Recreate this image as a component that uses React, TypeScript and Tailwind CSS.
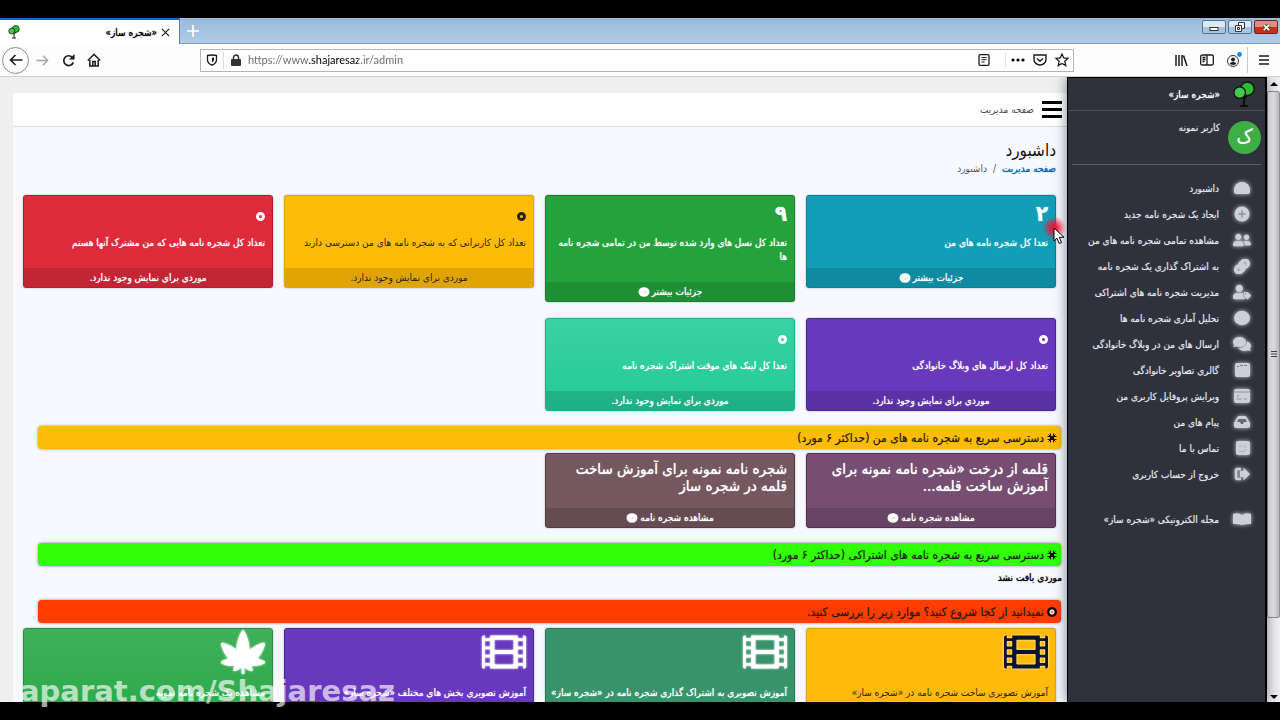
import type { ReactNode } from "react";
import { FaCannabis, FaComments, FaFilm, FaLink, FaUserFriends, FaUserTag } from "react-icons/fa";

function TreeLogo({ className, trunk }: { className: string; trunk: string }) {
  return (
    <svg viewBox="0 0 24 28" className={className} aria-hidden="true">
      <path d="M12 13v13M8 26h8M12 19l4-5" stroke={trunk} strokeWidth="2" fill="none" />
      <circle cx="15.5" cy="8" r="7" fill="#2ebb32" stroke="#101810" strokeWidth="1.4" />
      <circle cx="7.500" cy="12" r="6" fill="#49c64c" stroke="#101810" strokeWidth="1.4" />
    </svg>
  );
}

function Glyph({ children }: { children: ReactNode }) {
  return (
    <svg viewBox="0 0 18 16" className="h-4 w-[18px]" fill="currentColor" aria-hidden="true">
      {children}
    </svg>
  );
}

const menu: { label: string; icon: ReactNode }[] = [
  { label: "داشبورد", icon: <Glyph><path d="M1 10a8 8 0 0 1 16 0v2q0 2-2 2H3q-2 0-2-2z" /></Glyph> },
  {
    label: "ایجاد یک شجره نامه جدید",
    icon: (
      <Glyph>
        <circle cx="9" cy="8" r="7.500" />
        <path d="M9 4.500v7M5.500 8h7" stroke="#8e919b" strokeWidth="1.400" />
      </Glyph>
    ),
  },
  { label: "مشاهده تمامی شجره نامه های من", icon: <FaUserFriends className="h-4 w-[18px]" /> },
  {
    label: "به اشتراک گذاری یک شجره نامه",
    icon: <FaLink className="h-[15px] w-[18px]" stroke="currentColor" strokeWidth="40" />,
  },
  { label: "مدیریت شجره نامه های اشتراکی", icon: <FaUserTag className="h-4 w-[18px]" /> },
  { label: "تحلیل آماری شجره نامه ها", icon: <Glyph><ellipse cx="9" cy="8" rx="8" ry="7.200" /></Glyph> },
  { label: "ارسال های من در وبلاگ خانوادگی", icon: <FaComments className="h-4 w-[18px]" /> },
  {
    label: "گالری تصاویر خانوادگی",
    icon: (
      <Glyph>
        <rect x="2" y="1" width="15" height="14" rx="2" />
        <path d="M4 4.500h2M7 3.500h3M11 3.500h3" stroke="#777a84" strokeWidth="1.200" />
      </Glyph>
    ),
  },
  {
    label: "ویرایش پروفایل کاربری من",
    icon: (
      <Glyph>
        <rect x="1" y="1" width="16" height="14" rx="2" />
        <path d="M1 4h16M4 8h2M3.500 11h5M11 11h3" stroke="#8e919b" strokeWidth="1" />
      </Glyph>
    ),
  },
  {
    label: "پیام های من",
    icon: (
      <Glyph>
        <path d="M1 9 4.500 3Q5 2 6 2h6q1 0 1.500 1L17 9v3q0 2-2 2H3q-2 0-2-2z" />
        <path d="M5.500 5h7l1.500 3h-3l-1 2H8L7 8H4z" fill="#666a74" />
      </Glyph>
    ),
  },
  {
    label: "تماس با ما",
    icon: (
      <Glyph>
        <rect x="3" y="1" width="14" height="14" rx="2" />
        <path d="M6 6h3M12 5v3M6 11q3 2 7-1" stroke="#a9acb6" strokeWidth="1" fill="none" />
      </Glyph>
    ),
  },
  {
    label: "خروج از حساب کاربری",
    icon: (
      <Glyph>
        <path d="M10.500 1.500 17 8l-6.500 6.500V11H7V5h3.500z" />
        <path d="M8 3H4.500Q3 3 3 4.500v7Q3 13 4.500 13H8" stroke="currentColor" strokeWidth="2.600" fill="none" />
      </Glyph>
    ),
  },
  {
    label: "مجله الکترونیکی «شجره ساز»",
    icon: <Glyph><path d="M0 3q5-2 9 1 4-3 9-1v10q-5-.5-9 1-4-1.500-9-1z" /></Glyph>,
  },
];

const strong = "[text-shadow:0_0_1px_currentColor]";

type Stat = { value: string; label: string; footer: string; more?: boolean; tone: string };

const stats: Stat[] = [
  { value: "۲", label: "تعدا کل شجره نامه های من", footer: "جزئیات بیشتر", more: true, tone: `bg-[#139eb8] border-[#0f7f96] text-white ${strong}` },
  { value: "۹", label: "تعداد کل نسل های وارد شده توسط من در تمامی شجره نامه ها", footer: "جزئیات بیشتر", more: true, tone: `bg-[#24a33c] border-[#1a8030] text-white ${strong}` },
  { value: "۰", label: "تعداد کل کاربرانی که به شجره نامه های من دسترسی دارند", footer: "موردی برای نمایش وجود ندارد.", tone: "bg-[#ffbc06] border-[#dba61a] text-[#2a2410]" },
  { value: "۰", label: "تعداد کل شجره نامه هایی که من مشترک آنها هستم", footer: "موردی برای نمایش وجود ندارد.", tone: `bg-[#dd2b3b] border-[#b51f30] text-white ${strong}` },
  { value: "۰", label: "تعداد کل ارسال های وبلاگ خانوادگی", footer: "موردی برای نمایش وجود ندارد.", tone: `bg-[#6838bd] border-[#4c2599] text-white ${strong}` },
  { value: "۰", label: "تعدا کل لینک های موقت اشتراک شجره نامه", footer: "موردی برای نمایش وجود ندارد.", tone: `bg-linear-to-b from-[#38d3a0] to-[#22c997] border-[#1fb387] text-white ${strong}` },
];

const trees = [
  { title: "قلمه از درخت «شجره نامه نمونه برای آموزش ساخت قلمه...", tone: "bg-[#764e72] border-[#54304f]" },
  { title: "شجره نامه نمونه برای آموزش ساخت قلمه در شجره ساز", tone: "bg-[#74575f] border-[#553c43]" },
];

const guides = [
  { label: "آموزش تصویری ساخت شجره نامه در «شجره ساز»", film: true, tone: "bg-[#ffba0a] border-[#e0a51a] text-[#2a2410]", iconTone: "text-[#0c1430]" },
  { label: "آموزش تصویری به اشتراک گذاری شجره نامه در «شجره ساز»", film: true, tone: `bg-[#38936a] border-[#2b7a56] text-white ${strong}`, iconTone: "text-white" },
  { label: "آموزش تصویری بخش های مختلف «شجره ساز»", film: true, tone: `bg-[#6838bd] border-[#4c2599] text-white ${strong}`, iconTone: "text-white" },
  { label: "مشاهده یک شجره نامه نمونه", film: false, tone: `bg-linear-to-b from-[#40b05a] to-[#2ba848] border-[#2b9043] text-white ${strong}`, iconTone: "text-white" },
];

function MoreDot() {
  return (
    <svg viewBox="0 0 12 10" className="h-[10px] w-3" aria-hidden="true">
      <ellipse cx="6" cy="5" rx="5.500" ry="4.800" fill="#fff" />
      <path d="M3.500 5h1.200M6 5h2.500" stroke="#b9b9c4" strokeWidth=".8" />
    </svg>
  );
}

function StatValue({ value }: { value: string }) {
  if (value !== "۰") return <p className="h-6 text-[22px] font-bold leading-6">{value}</p>;
  return (
    <p className="flex h-6 items-center pt-1">
      <span className="rounded-full border-[3px] border-current">
        <span className="block size-[3px] overflow-hidden text-[3px] leading-[3px] text-transparent [text-shadow:none]">{value}</span>
      </span>
    </p>
  );
}

function CardFooter({ children }: { children: ReactNode }) {
  return (
    <a href="#details" className="flex h-[19px] items-center justify-center gap-[2px] bg-black/12 text-[10px] leading-[18px]">
      {children}
    </a>
  );
}

function SectionBar({ tone, icon, children }: { tone: string; icon: ReactNode; children: ReactNode }) {
  return (
    <h2 className={`ml-[25px] mr-[6px] flex h-[23px] items-center gap-[3px] rounded px-1 text-[12px] text-[#1c1a10] [text-shadow:0_0_1px_rgba(0,0,0,0.4)] shadow-[0_0_3px_rgba(70,90,120,0.7)] ${tone}`}>
      {icon}
      {children}
    </h2>
  );
}

const asterisk = (
  <svg viewBox="0 0 10 10" className="size-[10px]" aria-hidden="true">
    <path d="M3.500 .5v9M6.500 .5v9M.5 3.500h9M.5 6.500h9M1.500 1.500l7 7M8.500 1.500l-7 7" stroke="#15120a" strokeWidth="1" />
  </svg>
);

const ring = (
  <svg viewBox="0 0 10 10" className="size-[10px]" aria-hidden="true">
    <circle cx="5" cy="5" r="5" fill="#170d08" />
    <path d="M3.800 2.500h2.400L7.500 4v2L6.200 7.500H3.800L2.500 6V4z" fill="#ffddcf" />
    <path d="M4 4l2 2M6 4l-2 2" stroke="#e0805c" strokeWidth=".8" />
  </svg>
);

const grid = "grid grid-cols-4 items-start gap-x-[11px] gap-y-4 pl-[10px] pr-[11px]";
const card = "overflow-hidden rounded-[3px] border shadow-[0_0_2px_rgba(0,0,0,0.35)]";
const tool = "flex shrink-0 items-center justify-center";
const windowButton = "flex h-[14px] w-6 items-center justify-center rounded-[2px] border border-[#5d7390] bg-linear-to-b from-[#dce8f5] from-50% to-[#a9c2de] to-50%";

function Browser() {
  return (
    <header dir="ltr" className="font-['Open_Sans',sans-serif]">
      <div className="flex h-[26px] border-b border-[#7d9cc0] bg-linear-to-b from-[#9bb9db] to-[#b0cce9]">
        <div className="-mb-px flex w-[180px] items-center border-r border-t-2 border-r-[#5f7da3] border-t-[#1768c4] bg-white pl-[6px] pr-[9px]">
          <TreeLogo className="h-[14px] w-4" trunk="#222" />
          <span dir="rtl" className={`ml-auto mr-1 font-['DejaVu_Sans_Condensed','DejaVu_Sans',sans-serif] text-[10px] ${strong}`}>«شجره ساز»</span>
          <button aria-label="Close tab">
            <svg viewBox="0 0 10 10" className="size-[9px]"><path d="m1 1 8 8M9 1 1 9" stroke="#222" strokeWidth="1.400" /></svg>
          </button>
        </div>
        <button aria-label="New tab" className="flex w-[26px] items-center justify-center">
          <svg viewBox="0 0 12 12" className="size-3"><path d="M6 0v12M0 6h12" stroke="#fff" strokeWidth="1.600" /></svg>
        </button>
        <div className="ml-auto flex gap-[2px] pr-[2px] pt-[2px]">
          <button aria-label="Minimize" className={windowButton}>
            <svg viewBox="0 0 10 10" className="size-[10px]"><rect x="1" y="5.500" width="8" height="3" fill="#fff" stroke="#334" /></svg>
          </button>
          <button aria-label="Restore" className={windowButton}>
            <svg viewBox="0 0 10 10" className="size-[10px]" fill="#fff" stroke="#334"><path d="M3.500.500h6v6h-6z" /><path d="M.500 3.500h6v6h-6zM2.500 5.500h2v2h-2z" /></svg>
          </button>
          <button aria-label="Close" className="flex h-[14px] w-6 items-center justify-center rounded-[2px] border border-[#6b2620] bg-linear-to-b from-[#e08d7e] from-50% to-[#c4301c] to-50%">
            <svg viewBox="0 0 10 10" className="size-[9px]"><path d="m2 2 6 6M8 2 2 8" stroke="#532" strokeWidth="3.600" /><path d="m2 2 6 6M8 2 2 8" stroke="#fff" strokeWidth="2" /></svg>
          </button>
        </div>
      </div>
      <div className="flex h-[33px] items-center border-b border-[#cfcfcf] bg-[#fdfdfd] text-[#1b1b1f]">
        <nav className="flex w-[200px] shrink-0 items-center pl-[2px]" aria-label="Browser">
          <button aria-label="Back" className={`${tool} size-[27px] rounded-full border border-[#8b8b8b]`}>
            <svg viewBox="0 0 14 14" className="size-[14px]" fill="none" stroke="currentColor" strokeWidth="1.600"><path d="M13.500 7H1.500M6.500 2 1.500 7l5 5" /></svg>
          </button>
          <button aria-label="Forward" className={`${tool} w-[27px] text-[#a5a5a5]`}>
            <svg viewBox="0 0 14 14" className="size-[13px]" fill="none" stroke="currentColor" strokeWidth="1.500"><path d="M.500 7h12M7.500 2l5 5-5 5" /></svg>
          </button>
          <button aria-label="Reload" className={`${tool} w-[25px]`}>
            <svg viewBox="0 0 14 14" className="size-[13px]" fill="none" stroke="currentColor" strokeWidth="1.800"><path d="M11.500 4A5.300 5.300 0 1 0 12.200 9" /><path d="M13.500 0v6h-6z" fill="currentColor" stroke="none" /></svg>
          </button>
          <button aria-label="Home" className={`${tool} w-[25px]`}>
            <svg viewBox="0 0 14 14" className="size-[14px]" fill="none" stroke="currentColor" strokeWidth="1.500"><path d="M.800 7.500 7 1.300l6.200 6.200M2.800 7v6h8.400V7" /><path d="M5.800 13V8.500h2.400V13" /></svg>
          </button>
        </nav>
        <div className="flex h-[23px] min-w-0 flex-1 items-center border border-[#b5b5b5] bg-white">
          <span className={`${tool} h-[17px] w-[23px] border-r border-[#ddd]`}>
            <svg viewBox="0 0 12 12" className="size-3" fill="none" stroke="currentColor" strokeWidth="1.300"><path d="M1.500 1.500q4.500-1 9 0v4q0 4-4.500 5.700Q1.500 9.500 1.500 5.500z" /><path d="M6 3.500v5q2-1 2-3v-2z" fill="currentColor" stroke="none" /></svg>
          </span>
          <span className={`${tool} w-[23px]`}>
            <svg viewBox="0 0 10 12" className="h-3 w-[10px]"><rect y="5" width="10" height="7" rx="1" fill="#333" /><path d="M2.500 6V3.500a2.500 2.500 0 0 1 5 0V6" fill="none" stroke="#333" strokeWidth="1.500" /></svg>
          </span>
          <input
            aria-label="Address"
            defaultValue="https://www.shajaresaz.ir/admin"
            className="min-w-0 flex-1 bg-[linear-gradient(90deg,#666_62px,#000_62px,#000_111px,#666_111px)] bg-clip-text pl-px pt-px font-['Lato','Open_Sans',sans-serif] text-[11px] text-transparent caret-black outline-none"
          />
          <button aria-label="Reader view" className={`${tool} w-[42px]`}>
            <svg viewBox="0 0 12 12" className="size-3" fill="none" stroke="currentColor" strokeWidth="1.300"><rect x="1" y=".700" width="10" height="10.600" rx="1" /><path d="M3.500 3.500h5M3.500 5.700h5M3.500 8h3" strokeWidth="1" /></svg>
          </button>
          <button aria-label="Page actions" className={`${tool} h-4 w-6 border-l border-[#e5e5e5]`}>
            <svg viewBox="0 0 14 4" className="h-1 w-[14px]"><circle cx="2" cy="2" r="1.600" /><circle cx="7" cy="2" r="1.600" /><circle cx="12" cy="2" r="1.600" /></svg>
          </button>
          <button aria-label="Save to Pocket" className={`${tool} w-[22px]`}>
            <svg viewBox="0 0 14 12" className="h-3 w-[14px]" fill="none" stroke="currentColor" strokeWidth="1.400"><path d="M1 1h12v4.500a6 5.500 0 0 1-12 0z" /><path d="m4 4.500 3 2.800 3-2.800" /></svg>
          </button>
          <button aria-label="Bookmark" className={`${tool} w-[22px]`}>
            <svg viewBox="0 0 14 14" className="size-[14px]" fill="none" stroke="currentColor" strokeWidth="1.300"><path d="m7 1 1.800 4 4.200.400-3.200 2.900 1 4.300L7 10.400l-3.800 2.200 1-4.300L1 5.400 5.200 5z" /></svg>
          </button>
        </div>
        <div className="flex w-[206px] shrink-0 items-center justify-end">
          <button aria-label="Library" className={`${tool} w-[26px]`}>
            <svg viewBox="0 0 14 12" className="h-3 w-[14px]" stroke="currentColor" strokeWidth="1.500"><path d="M2 1v11M5 1v11M8 1v11M9.500 1.500 13 12" /></svg>
          </button>
          <button aria-label="Sidebars" className={`${tool} w-[26px]`}>
            <svg viewBox="0 0 14 12" className="h-3 w-[14px]" fill="none" stroke="currentColor" strokeWidth="1.300"><rect x=".700" y="1" width="12.600" height="10" rx="1.500" /><path d="M7 1v10M2.500 3.500h3M2.500 5.500h3M2.500 7.500h2" /></svg>
          </button>
          <button aria-label="Account" className={`${tool} w-[27px]`}>
            <svg viewBox="0 0 16 16" className="size-4"><circle cx="7" cy="9" r="5.500" fill="none" stroke="#333" /><circle cx="7" cy="7.500" r="2" fill="#222" /><path d="M3.500 11.500q3.500-3.500 7 0-3.500 3-7 0" fill="#222" /><circle cx="13.500" cy="2.500" r="2.400" fill="#0a8fe0" /></svg>
          </button>
          <button aria-label="Open menu" className={`${tool} h-[26px] w-[33px] border-l border-[#ccc]`}>
            <svg viewBox="0 0 10 10" className="size-[10px]" stroke="currentColor" strokeWidth="1.300"><path d="M0 1h10M0 5h10M0 9h10" /></svg>
          </button>
        </div>
      </div>
    </header>
  );
}

function Sidebar() {
  return (
    <aside className="z-10 w-[200px] shrink-0 border border-b-0 border-r-2 border-black bg-[#2f323d] text-[#e6e8ee] shadow-[0_0_12px_rgba(40,45,60,0.6)] [text-shadow:0_0_1px_rgba(230,232,238,0.6)]">
      <a href="#home" className={`flex h-[33px] items-center border-b border-[#4d505b] pr-[9px] text-[10px] text-white ${strong}`}>
        <span className="flex w-[25px] justify-center"><TreeLogo className="h-[27px] w-6" trunk="#120c0a" /></span>
        <span className="mr-[11px]">«شجره ساز»</span>
      </a>
      <div className="mx-1 flex h-[54px] border-b border-[#5a5d67] pt-[10px]">
        <span className="flex size-[33px] items-center justify-center rounded-full bg-[#3daf45] pb-1 text-[20px] leading-none text-white">ک</span>
        <a href="#profile" className="mr-2 text-[10px] leading-[14px]">کاربر نمونه</a>
      </div>
      <nav className="pt-[10px]" aria-label="منو">
        <ul>
          {menu.map((item) => (
            <li key={item.label} className="last:mt-[19px]">
              <a href="#menu" className="flex h-[26px] items-center pr-[13px] text-[10px]">
                <span className="flex w-5 justify-center text-[#cdd0d9] drop-shadow-[0_0_2px_#cdd0d9]">{item.icon}</span>
                <span className="mr-[13px] whitespace-nowrap">{item.label}</span>
              </a>
            </li>
          ))}
        </ul>
      </nav>
    </aside>
  );
}

function Dashboard() {
  return (
    <main className="min-w-0 flex-1 overflow-hidden bg-[#efefef] pl-[13px] pt-4">
      <div className="flex h-[34px] items-center border-b border-[#dcdcdc] bg-white pr-[5px]">
        <button aria-label="باز کردن منو">
          <svg viewBox="0 0 20 17" className="h-[17px] w-5" stroke="#000" strokeWidth="3"><path d="M0 1.500h20M0 8.500h20M0 15.500h20" /></svg>
        </button>
        <a href="#admin" className="mr-2 text-[10px] text-[#4d4d4d]">صفحه مدیریت</a>
      </div>
      <div className="bg-[#f8f9fe] pt-3">
        <h1 className="px-[11px] text-[17px] leading-[22px] text-[#111]">داشبورد</h1>
        <nav aria-label="مسیر" className="mb-[18px] flex gap-[6px] px-[11px] text-[10px] leading-4 text-[#4d5259]">
          <a href="#admin" className={`text-[#0869b8] ${strong}`}>صفحه مدیریت</a>
          <span>/</span>
          <span>داشبورد</span>
        </nav>
        <section className={grid}>
          {stats.map((s) => (
            <article key={s.label} className={`${card} ${s.tone}`}>
              <div className="px-[7px] pb-[18px] pt-[6px]">
                <StatValue value={s.value} />
                <p className="mt-[10px] text-[10px] leading-[14px]">{s.label}</p>
              </div>
              <CardFooter>
                {s.footer}
                {s.more && <MoreDot />}
              </CardFooter>
            </article>
          ))}
        </section>
        <div className="mt-[15px]">
          <SectionBar tone="bg-[#ffbc06]" icon={asterisk}>دسترسی سریع به شجره نامه های من (حداکثر ۶ مورد)</SectionBar>
        </div>
        <section className={`mt-1 ${grid}`}>
          {trees.map((t) => (
            <article key={t.title} className={`${card} ${t.tone} text-white ${strong}`}>
              <h3 className="px-[7px] pb-[13px] pt-[7px] text-[15px] leading-[17px]">{t.title}</h3>
              <CardFooter>
                مشاهده شجره نامه
                <MoreDot />
              </CardFooter>
            </article>
          ))}
        </section>
        <div className="mt-[15px]">
          <SectionBar tone="bg-[#33ff08]" icon={asterisk}>دسترسی سریع به شجره نامه های اشتراکی (حداکثر ۶ مورد)</SectionBar>
        </div>
        <p className={`mt-1 px-[5px] text-[10px] leading-[15px] text-black ${strong}`}>موردی یافت نشد</p>
        <div className="mt-[15px]">
          <SectionBar tone="bg-[#ff3d00]" icon={ring}>نمیدانید از کجا شروع کنید؟ موارد زیر را بررسی کنید.</SectionBar>
        </div>
        <section className={`mt-[5px] ${grid}`}>
          {guides.map((g) => (
            <article key={g.label} className={`${card} ${g.tone}`}>
              <a href="#guide" className="block px-[7px] pb-[18px] pt-px">
                <span className={`block drop-shadow-[0_0_1px_rgba(255,255,255,0.9)] ${g.iconTone}`}>
                  {g.film ? <FaFilm className="size-11" /> : <FaCannabis className="size-11" />}
                </span>
                <span className="mt-3 block whitespace-nowrap text-[10px] leading-[14px]">{g.label}</span>
              </a>
            </article>
          ))}
        </section>
      </div>
    </main>
  );
}

function Scrollbar() {
  return (
    <div aria-hidden="true" className="flex w-[13px] shrink-0 flex-col items-center bg-[#f1f1f1]">
      <svg viewBox="0 0 8 4" className="my-[5px] h-1 w-2"><path d="m0 4 4-4 4 4z" /></svg>
      <div className="flex w-full flex-[524] items-center justify-center rounded-[2px] border border-[#929292] bg-linear-to-r from-white via-[#ececec] to-[#b9b9b9]">
        <svg viewBox="0 0 6 8" className="h-2 w-[6px]" stroke="#444"><path d="M0 1.500h6M0 4h6M0 6.500h6" /></svg>
      </div>
      <div className="flex-[74]" />
      <svg viewBox="0 0 8 4" className="my-[3px] h-1 w-2"><path d="m0 0 4 4 4-4z" /></svg>
    </div>
  );
}

export default function App() {
  return (
    <div dir="rtl" className="relative flex h-screen flex-col overflow-hidden bg-black py-[18px] font-['DejaVu_Sans_Condensed','DejaVu_Sans',sans-serif]">
      <Browser />
      <div dir="ltr" className="flex min-h-0 flex-1 overflow-hidden bg-white">
        <div dir="rtl" className="flex min-w-0 flex-1">
          <Sidebar />
          <Dashboard />
        </div>
        <Scrollbar />
      </div>
      <div aria-hidden="true" className="absolute left-[1042px] top-[216px] z-20">
        <div className="size-6 rounded-full bg-[radial-gradient(circle,rgba(240,20,50,0.9)_20%,rgba(240,20,50,0)_70%)]" />
        <svg viewBox="0 0 12 18" className="absolute left-[11px] top-[11px] h-[18px] w-3"><path d="M1 1v13l3-2.800 2.200 5.300 2.300-1-2.200-5.200H11z" fill="#fff" stroke="#000" /></svg>
      </div>
      <p dir="ltr" className="absolute bottom-[13px] left-[20px] z-20 font-['DejaVu_Sans',sans-serif] text-[29px] font-bold leading-8 text-white/65">aparat.com/Shajaresaz</p>
    </div>
  );
}
